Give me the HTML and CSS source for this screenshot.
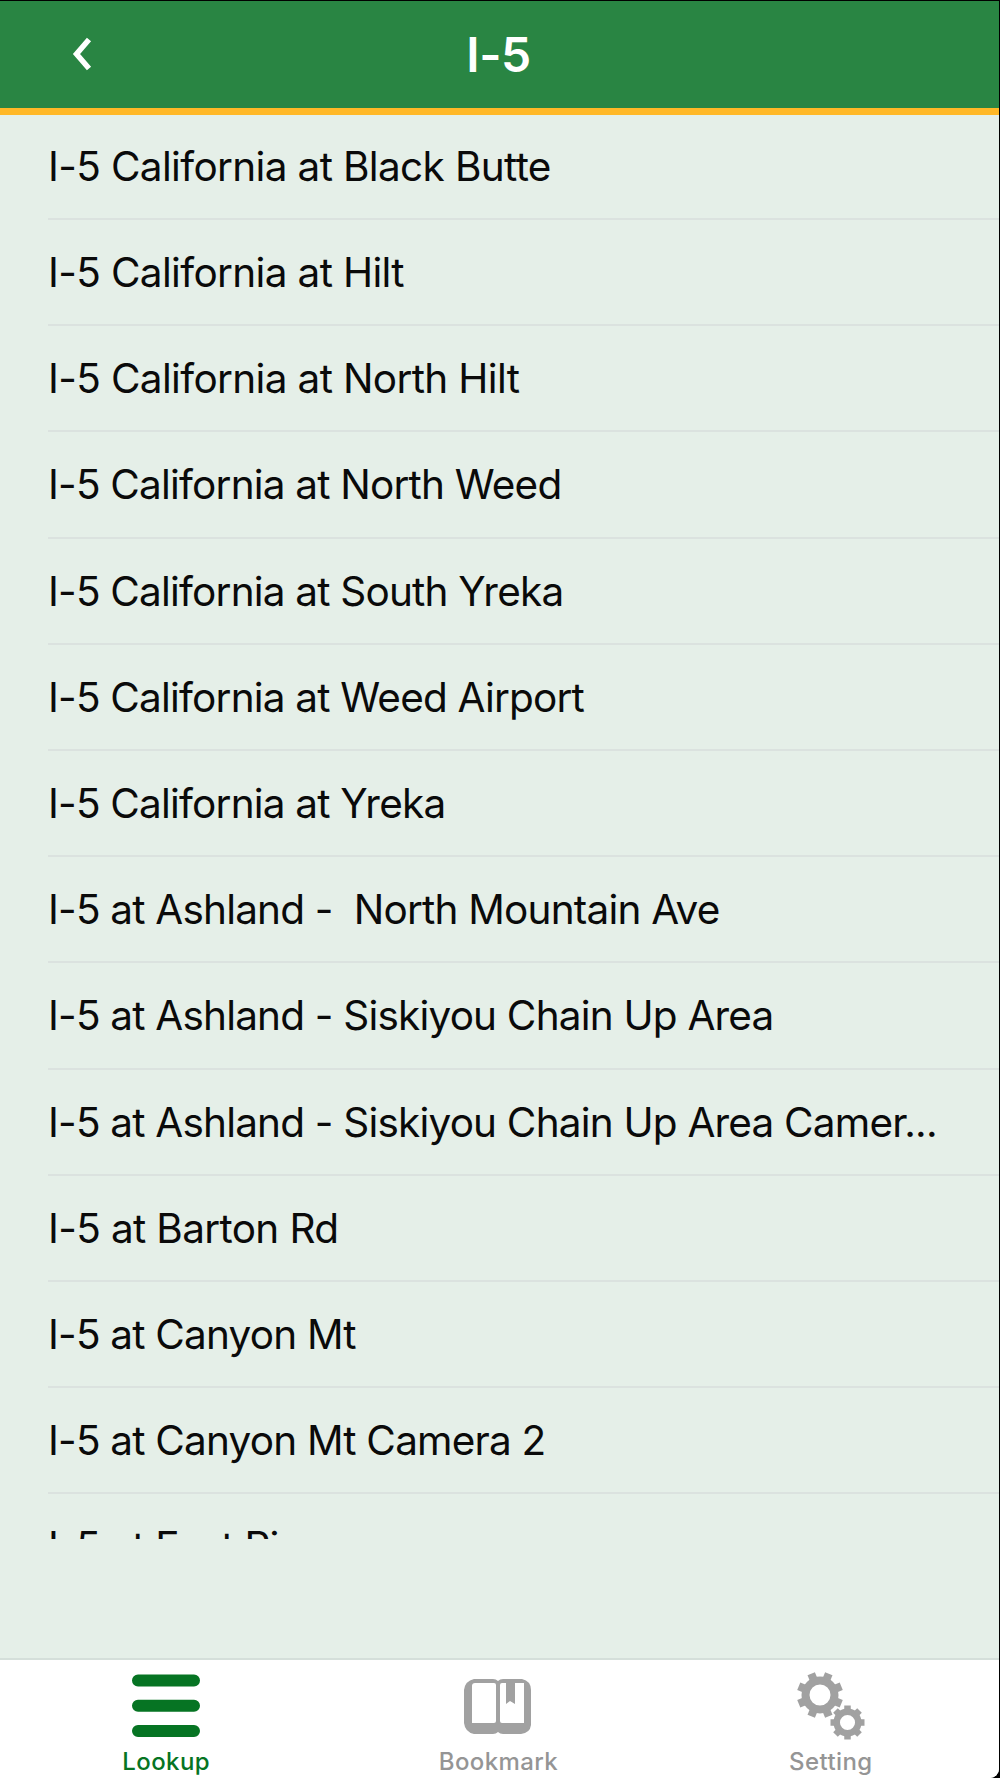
FILE: index.html
```html
<!doctype html>
<html lang="en">
<head>
  <meta charset="utf-8">
  <title>I-5</title>
  <link rel="stylesheet" href="styles.css">
</head>
<body>
  <div class="screen">
    <header class="navbar">
      <svg class="back" width="20" height="36" viewBox="0 0 20 36">
        <path d="M17 3.5 L4.5 18 L17 32.5" fill="none" stroke="#fff" stroke-width="5.5"/>
      </svg>
      <h1 class="title">I-5</h1>
    </header>
    <ul class="list">
      <li class="row loose">I-5 California at Black Butte</li>
      <li class="row loose">I-5 California at Hilt</li>
      <li class="row loose">I-5 California at North Hilt</li>
      <li class="row">I-5 California at North Weed</li>
      <li class="row">I-5 California at South Yreka</li>
      <li class="row">I-5 California at Weed Airport</li>
      <li class="row">I-5 California at Yreka</li>
      <li class="row">I-5 at Ashland -  North Mountain Ave</li>
      <li class="row">I-5 at Ashland - Siskiyou Chain Up Area</li>
      <li class="row">I-5 at Ashland - Siskiyou Chain Up Area Camer...</li>
      <li class="row loose">I-5 at Barton Rd</li>
      <li class="row">I-5 at Canyon Mt</li>
      <li class="row">I-5 at Canyon Mt Camera 2</li>
      <li class="row">I-5 at East Pine</li>
    </ul>
    <nav class="tabs">
      <a class="tab active">
        <svg class="icon" width="70" height="70" viewBox="0 0 70 70">
          <path d="M7 9.5H63M7 34.7H63M7 60H63" fill="none" stroke="currentColor" stroke-width="12" stroke-linecap="round"/>
        </svg>
        <span class="label">Lookup</span>
      </a>
      <a class="tab">
        <svg class="icon" width="70" height="70" viewBox="0 0 70 70">
          <path fill="currentColor" fill-rule="evenodd" d="M11 8H30Q33 8 35 10Q37 8 40 8H59Q68 10 68 19V54Q67 62 58 63H40Q37 63 35 61Q33 63 30 63H11Q2 61 1 52V19Q2 10 11 8ZM12 12Q9 12 9 15V52H31Q33 52 33 50V14Q33 12 31 12ZM39 12Q37 12 37 14V50Q37 52 39 52H61V12H52V33L47 30L43 33V12Z"/>
        </svg>
        <span class="label">Bookmark</span>
      </a>
      <a class="tab">
        <svg class="icon" width="70" height="70" viewBox="0 0 70 70">
          <g fill="none" stroke="currentColor">
            <circle cx="24" cy="24" r="14.5" stroke-width="8"/>
            <g stroke-width="8">
              <path id="tooth" d="M24 7V1" transform="rotate(22.5 24 24)"/>
              <use href="#tooth" transform="rotate(45 24 24)"/>
              <use href="#tooth" transform="rotate(90 24 24)"/>
              <use href="#tooth" transform="rotate(135 24 24)"/>
              <use href="#tooth" transform="rotate(180 24 24)"/>
              <use href="#tooth" transform="rotate(225 24 24)"/>
              <use href="#tooth" transform="rotate(270 24 24)"/>
              <use href="#tooth" transform="rotate(315 24 24)"/>
            </g>
            <circle cx="51.5" cy="51.5" r="14.5" stroke="#fff" stroke-width="3"/>
            <circle cx="51.5" cy="51.5" r="10.8" stroke-width="6.5"/>
            <g stroke-width="6.5">
              <path id="cog" d="M51.5 39V34.5"/>
              <use href="#cog" transform="rotate(45 51.5 51.5)"/>
              <use href="#cog" transform="rotate(90 51.5 51.5)"/>
              <use href="#cog" transform="rotate(135 51.5 51.5)"/>
              <use href="#cog" transform="rotate(180 51.5 51.5)"/>
              <use href="#cog" transform="rotate(225 51.5 51.5)"/>
              <use href="#cog" transform="rotate(270 51.5 51.5)"/>
              <use href="#cog" transform="rotate(315 51.5 51.5)"/>
            </g>
          </g>
        </svg>
        <span class="label">Setting</span>
      </a>
    </nav>
  </div>
</body>
</html>
```
FILE: styles.css
```css
* {
  box-sizing: border-box;
}
body {
  margin: 0;
  background: #000;
  font-family: Inter, "Liberation Sans", sans-serif;
}
.screen {
  display: flex;
  flex-direction: column;
  height: 1778px;
  margin-right: 1px;
  border-top: 1px solid #000;
  border-radius: 0 0 9px 0;
  background: #e5efe8;
  overflow: hidden;
}
.navbar {
  display: grid;
  grid-template-columns: 140px 1fr 140px;
  align-items: center;
  flex: none;
  height: 114px;
  border-bottom: 7px solid #ffb827;
  background: #298543;
}
.back {
  margin-left: 72px;
  margin-top: -2px;
}
.title {
  margin: 0 2px 0 0;
  color: #fff;
  font-size: 48px;
  font-weight: 600;
  letter-spacing: -0.5px;
  text-align: center;
}
.list {
  flex: none;
  height: 1424px;
  margin: 0;
  padding: 0 0 0 48px;
  list-style: none;
  overflow: hidden;
}
.row {
  height: 106.2px;
  border-bottom: 2px solid #dbe2df;
  color: #0a0a0a;
  font-size: 40.5px;
  line-height: 106px;
  letter-spacing: -0.8px;
  white-space: pre;
}
.row:first-child {
  height: 105px;
  line-height: 104px;
}
.loose {
  letter-spacing: -0.65px;
}
.tabs {
  display: flex;
  height: 120px;
  margin-top: auto;
  padding-right: 2px;
  border-top: 2px solid #d5dfda;
  background: #fff;
}
.tab {
  display: flex;
  flex: 1;
  flex-direction: column;
  align-items: center;
  padding-top: 11px;
  color: #a1a1a1;
}
.label {
  margin-top: 6px;
  color: #959595;
  font-size: 24px;
  font-weight: 500;
  line-height: 30px;
  letter-spacing: 0.4px;
}
.active,
.active .label {
  color: #067423;
}
```
